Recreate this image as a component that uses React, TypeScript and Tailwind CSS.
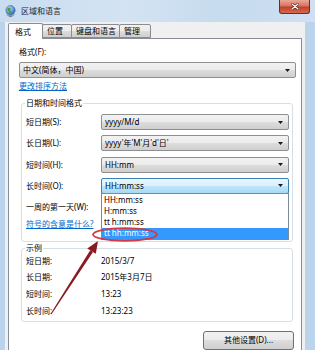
import React from 'react';

function Caret() {
  return (
    <svg width="5" height="3" viewBox="0 0 5 3" className="shrink-0">
      <path d="M0 0h5L2.5 3z" fill="#1a1a1a" />
    </svg>
  );
}

function Combo({ value, open, children }: { value: string; open?: boolean; children?: React.ReactNode }) {
  return (
    <div
      className={
        open
          ? 'relative flex h-[16px] flex-1 items-center justify-between rounded-[2px] border border-[#3c7fb1] bg-[linear-gradient(#eaf6fd_0%,#d9f0fc_50%,#bee6fd_50%,#a7d9f5_100%)] pl-[3px] pr-[5px]'
          : 'relative flex h-[16px] flex-1 items-center justify-between rounded-[2px] border border-[#8e8f8f] bg-[linear-gradient(#f2f2f2_0%,#ebebeb_50%,#dddddd_50%,#cfcfcf_100%)] pl-[3px] pr-[5px]'
      }
    >
      <span className="leading-[12px]">{value}</span>
      <Caret />
      {children}
    </div>
  );
}

function TitleBar() {
  return (
    <div className="flex h-[22px] shrink-0 bg-[linear-gradient(90deg,#c9dcf0,#d3e3f3_40%,#c6dbee_70%,#cfe0f2)]">
      <div className="flex items-center gap-[5px] pl-[5px]">
        <svg width="11" height="13" viewBox="0 0 11 13">
          <defs>
            <radialGradient id="gl" cx="0.35" cy="0.3" r="0.8">
              <stop offset="0" stopColor="#bfe3ff" />
              <stop offset="1" stopColor="#1e64b4" />
            </radialGradient>
          </defs>
          <circle cx="5.5" cy="5.2" r="4.6" fill="url(#gl)" stroke="#1b4f8a" strokeWidth="0.5" />
          <path d="M2.6 3.2c1-1.1 2.6-.9 3 .2s-.9 1.4-.4 2.4 1.7.8 1.5 1.9-1.4 1-2 .3-.2-1.5-1.1-2-1.8-1.6-1-2.8z" fill="#4f9a35" />
          <path d="M1.4 9.2a5.2 5.2 0 0 0 8.2 0" stroke="#6b6b6b" strokeWidth="0.8" fill="none" />
          <rect x="4.3" y="10.4" width="2.4" height="1.6" fill="#7a7a7a" />
        </svg>
        <span className="text-[8px] leading-[12px] text-[#1e1e1e]">区域和语言</span>
      </div>
      <div className="mr-[5px] ml-auto flex h-[14px] w-[31px] items-center justify-center rounded-b-[3px] border border-t-0 border-[#6d2b24] bg-[linear-gradient(#e9a899_0%,#d9735f_45%,#c2402b_55%,#d46a52_100%)]">
        <svg width="8" height="7" viewBox="0 0 8 7">
          <path d="M1 1l6 5M7 1L1 6" stroke="#3b1410" strokeWidth="2.4" strokeLinecap="round" />
          <path d="M1 1l6 5M7 1L1 6" stroke="#ffffff" strokeWidth="1.4" strokeLinecap="round" />
        </svg>
      </div>
    </div>
  );
}

function Tabs() {
  return (
    <div className="flex h-[16px] shrink-0 items-end">
      <div className="relative z-10 -mb-px flex h-[16px] w-[35px] items-center rounded-t-[2px] border border-b-0 border-[#898c95] bg-white pl-[6px]">
        格式
      </div>
      <div className="-ml-px flex h-[14px] w-[30px] items-center rounded-t-[2px] border border-[#898c95] bg-[linear-gradient(#f2f2f2_0%,#ebebeb_50%,#dddddd_50%,#cfcfcf_100%)] pl-[4px]">
        位置
      </div>
      <div className="-ml-px flex h-[14px] w-[49px] items-center rounded-t-[2px] border border-[#898c95] bg-[linear-gradient(#f2f2f2_0%,#ebebeb_50%,#dddddd_50%,#cfcfcf_100%)] pl-[4px]">
        键盘和语言
      </div>
      <div className="-ml-px flex h-[14px] w-[32px] items-center rounded-t-[2px] border border-[#898c95] bg-[linear-gradient(#f2f2f2_0%,#ebebeb_50%,#dddddd_50%,#cfcfcf_100%)] pl-[4px]">
        管理
      </div>
    </div>
  );
}

const formatRows = [
  { label: '短日期(S):', value: 'yyyy/M/d' },
  { label: '长日期(L):', value: "yyyy'年'M'月'd'日'" },
  { label: '短时间(H):', value: 'HH:mm' },
];

const longTimeOptions = ['HH:mm:ss', 'H:mm:ss', 'tt h:mm:ss', 'tt hh:mm:ss'];

const samples = [
  { label: '短日期:', value: '2015/3/7' },
  { label: '长日期:', value: '2015年3月7日' },
  { label: '短时间:', value: '13:23' },
  { label: '长时间:', value: '13:23:23' },
];

function Annotation() {
  return (
    <svg className="pointer-events-none absolute inset-0 z-20" width="315" height="350" viewBox="0 0 315 350">
      <ellipse cx="125" cy="234.5" rx="32" ry="6.3" fill="none" stroke="#d23a48" strokeWidth="1.8" />
      <polygon points="50.6,313.8 51.5,314.3 93,252 90.2,250.2" fill="#8b1a1f" />
      <polygon points="98,241 95.8,253.8 87.3,248.4" fill="#8b1a1f" />
    </svg>
  );
}

export default function App() {
  return (
    <div className="relative flex h-[350px] w-[315px] flex-col overflow-hidden bg-[#bcd3ec] font-['Noto_Sans','Noto_Sans_CJK_SC',sans-serif] text-[8px] text-black">
      <TitleBar />
      <div className="mr-[10px] ml-[5px] flex flex-1 flex-col bg-[#f0f0f0] px-[3px]">
        <Tabs />
        <div className="flex flex-1 flex-col border border-[#898c95] bg-white pt-[7px] pr-[5px] pl-[10px]">
          <div className="leading-[12px]">格式(F):</div>
          <div className="mt-[4px] flex">
            <Combo value="中文(简体，中国)" />
          </div>
          <div className="mt-[2px] leading-[12px] text-[#0066cc] underline">更改排序方法</div>

          <fieldset className="mt-[5px] mr-[3px] ml-[2px] rounded-[3px] border border-[#d5dfe5]">
            <legend className="ml-[3px] px-[1px] leading-[12px]">日期和时间格式</legend>
            <div className="flex flex-col gap-[5.3px] pt-[5px] pr-[3px] pb-[11px] pl-[4px]">
              {formatRows.map((r) => (
                <div key={r.label} className="flex h-[16px] items-center">
                  <div className="w-[75px] shrink-0">{r.label}</div>
                  <Combo value={r.value} />
                </div>
              ))}
              <div className="flex h-[16px] items-center">
                <div className="w-[75px] shrink-0">长时间(O):</div>
                <Combo value="HH:mm:ss" open>
                  <div className="absolute top-full -right-px -left-px z-10 border border-[#7a8a99] bg-white">
                    {longTimeOptions.map((o, i) => (
                      <div
                        key={o}
                        className={
                          i === 3
                            ? 'flex h-[11.3px] items-center bg-[#3399ff] pl-[2px] text-white'
                            : 'flex h-[11.3px] items-center pl-[2px]'
                        }
                      >
                        {o}
                      </div>
                    ))}
                  </div>
                </Combo>
              </div>
              <div className="flex h-[16px] items-center">
                <div className="w-[75px] shrink-0">一周的第一天(W):</div>
                <Combo value="" />
              </div>
              <div className="-mt-[2px] leading-[12px] text-[#0066cc] underline">符号的含意是什么?</div>
            </div>
          </fieldset>

          <fieldset className="mr-[3px] ml-[2px] rounded-[3px] border border-[#d5dfe5]">
            <legend className="ml-[3px] px-[1px] leading-[12px]">示例</legend>
            <div className="-mt-[2px] flex flex-col pb-[2px] pl-[4px]">
              {samples.map((s) => (
                <div key={s.label} className="flex h-[16.6px] items-center">
                  <div className="w-[75px] shrink-0">{s.label}</div>
                  <div>{s.value}</div>
                </div>
              ))}
            </div>
          </fieldset>

          <div className="mt-[9px] mr-[2px] flex justify-end">
            <div className="flex h-[19px] w-[91px] items-center justify-center rounded-[3px] border border-[#707070] bg-[linear-gradient(#f2f2f2_0%,#ebebeb_50%,#dddddd_50%,#cfcfcf_100%)]">
              其他设置(D)...
            </div>
          </div>
        </div>
      </div>
      <Annotation />
    </div>
  );
}
